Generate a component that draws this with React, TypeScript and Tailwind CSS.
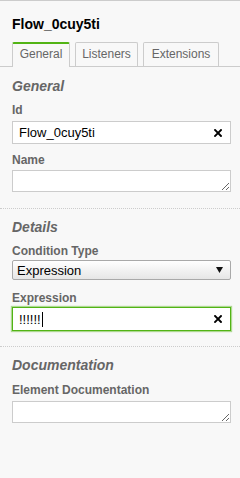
import React from "react";

const tabs = [
  { label: "General", width: "w-[58px]", active: true },
  { label: "Listeners", width: "w-[63px]", active: false },
  { label: "Extensions", width: "w-[76px]", active: false },
];

function ClearIcon() {
  return (
    <svg width="8" height="8" viewBox="0 0 8 8" className="shrink-0">
      <path d="M1 1L7 7M7 1L1 7" stroke="#000" strokeWidth="1.9" strokeLinecap="square" />
    </svg>
  );
}

function TextField({ value, focused }: { value: string; focused?: boolean }) {
  return (
    <div
      className={
        focused
          ? "flex h-[24px] w-[219px] items-center border border-[#52b415] bg-white pl-[6px] pr-[8px] shadow-[0_0_1px_1px_rgba(82,180,21,0.45)]"
          : "flex h-[23px] w-[219px] items-center border border-[#ccc] bg-white pl-[6px] pr-[8px]"
      }
    >
      <span className="flex flex-1 items-center text-[13px] leading-[15px] text-black">
        {value}
        {focused && <span className="ml-px inline-block h-[15px] w-px bg-black" />}
      </span>
      <ClearIcon />
    </div>
  );
}

function TextArea() {
  return (
    <textarea
      readOnly
      className="block h-[22px] w-[219px] resize-y border border-[#ccc] bg-white px-[6px] text-[13px] outline-none"
    />
  );
}

function Label({ children, className = "" }: { children: React.ReactNode; className?: string }) {
  return <div className={`text-[12px] font-bold leading-[14px] text-[#666] ${className}`}>{children}</div>;
}

function Heading({ children }: { children: React.ReactNode }) {
  return <div className="text-[14px] font-bold italic leading-[16px] text-[#666]">{children}</div>;
}

export default function App() {
  return (
    <div className="h-[478px] w-[240px] overflow-hidden border-t border-[#ccc] bg-[#f8f8f8] font-['Liberation_Sans',Arial,sans-serif]">
      <div className="px-3 pt-[15px] text-[14px] font-bold leading-[16px] text-black">Flow_0cuy5ti</div>

      <div className="mt-[10px] flex h-[25px] items-end gap-[5px] border-b border-[#ccc] px-3">
        {tabs.map((t) =>
          t.active ? (
            <div
              key={t.label}
              className={`${t.width} -mb-px h-[25px] rounded-t-[2px] border border-b-0 border-t-2 border-[#ccc] border-t-[#52b415] bg-[#f8f8f8] pt-[3px] text-center text-[12px] leading-[14px] text-[#666]`}
            >
              {t.label}
            </div>
          ) : (
            <div
              key={t.label}
              className={`${t.width} h-[24px] rounded-t-[2px] border border-b-0 border-[#ccc] bg-[#f8f8f8] pt-[4px] text-center text-[12px] leading-[14px] text-[#666]`}
            >
              {t.label}
            </div>
          )
        )}
      </div>

      <div className="border-b border-dotted border-[#ccc] px-3 pb-[16px] pt-[11px]">
        <Heading>General</Heading>
        <Label className="mt-[9px]">Id</Label>
        <div className="mt-[4px]">
          <TextField value="Flow_0cuy5ti" />
        </div>
        <Label className="mt-[9px]">Name</Label>
        <div className="mt-[3px]">
          <TextArea />
        </div>
      </div>

      <div className="border-b border-dotted border-[#ccc] px-3 pb-[15px] pt-[10px]">
        <Heading>Details</Heading>
        <Label className="mt-[9px]">Condition Type</Label>
        <div className="mt-[2px] flex h-[20px] w-[219px] items-center justify-between rounded-[2px] border border-[#a9a9a9] bg-gradient-to-b from-white to-[#e6e6e6] pl-[4px] pr-[7px]">
          <span className="text-[13px] leading-[15px] text-black">Expression</span>
          <svg width="7" height="6" viewBox="0 0 7 6">
            <path d="M0 0H7L3.5 6Z" fill="#111" />
          </svg>
        </div>
        <Label className="mt-[11px]">Expression</Label>
        <div className="mt-[2px]">
          <TextField value="!!!!!!" focused />
        </div>
      </div>

      <div className="px-3 pt-[10px]">
        <Heading>Documentation</Heading>
        <Label className="mt-[10px]">Element Documentation</Label>
        <div className="mt-[4px]">
          <TextArea />
        </div>
      </div>
    </div>
  );
}
